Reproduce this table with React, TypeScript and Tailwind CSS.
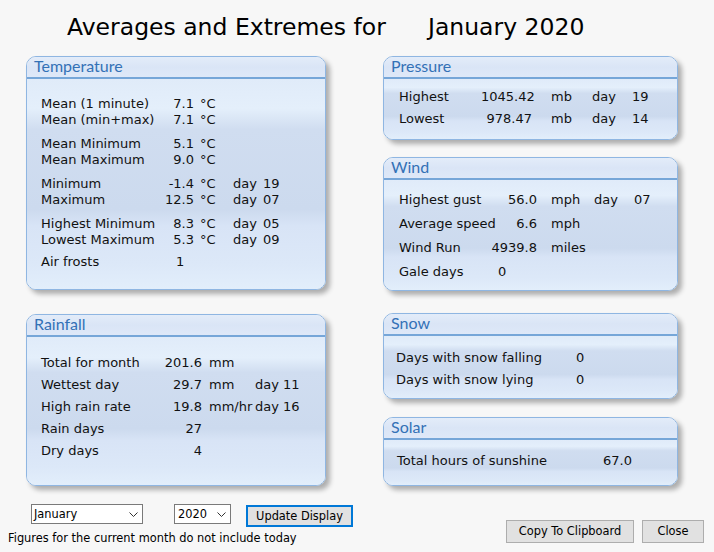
import React from 'react';

type Cell = string | undefined;

const bodyBg =
  'bg-[linear-gradient(180deg,#e0ebf9_0%,#e4effb_14%,#d0ddf0_24%,#ccdaee_62%,#d8e4f6_70%,#dce8f8_88%,#e2eefb_100%)]';

const Panel: React.FC<{ title: string; className: string; children: React.ReactNode }> = ({
  title,
  className,
  children,
}) => (
  <div
    className={`flex flex-col rounded-[10px] border border-[#8fb6e2] overflow-hidden shadow-[4px_4px_5px_rgba(0,0,0,0.3)] ${className}`}
  >
    <div className="h-[20px] shrink-0 pl-[7px] bg-[linear-gradient(180deg,#e3ecf9_0%,#dae5f6_50%,#dee8f8_100%)]">
      <span className="font-['Lato',sans-serif] text-[16px] leading-[17px] text-[#3371b6]">{title}</span>
    </div>
    <div className="h-[2px] shrink-0 bg-[#76a6d8]" />
    <div className={`flex-1 ${bodyBg}`}>{children}</div>
  </div>
);

const TempRow: React.FC<{ label: string; value: string; day?: Cell }> = ({ label, value, day }) => (
  <div className="flex h-[16px] items-center whitespace-nowrap">
    <span className="w-[118px] shrink-0">{label}</span>
    <span className="w-[35px] shrink-0 text-right">{value}</span>
    <span className="w-[39px] shrink-0 pl-[6px]">°C</span>
    {day && (
      <>
        <span className="w-[30px] shrink-0">day</span>
        <span>{day}</span>
      </>
    )}
  </div>
);

const RainRow: React.FC<{ label: string; value: string; unit?: Cell; day?: Cell }> = ({
  label,
  value,
  unit,
  day,
}) => (
  <div className="flex h-[22px] items-center whitespace-nowrap">
    <span className="w-[118px] shrink-0">{label}</span>
    <span className="w-[43px] shrink-0 text-right">{value}</span>
    <span className="w-[53px] shrink-0 pl-[7px]">{unit}</span>
    {day && <span>day {day}</span>}
  </div>
);

const PressRow: React.FC<{ label: string; value: string; day: string }> = ({ label, value, day }) => (
  <div className="flex h-[22px] items-center whitespace-nowrap">
    <span className="w-[82px] shrink-0">{label}</span>
    <span className="w-[51px] shrink-0 text-right">{value}</span>
    <span className="w-[60px] shrink-0 pl-[19px]">mb</span>
    <span className="w-[40px] shrink-0">day</span>
    <span>{day}</span>
  </div>
);

const WindRow: React.FC<{ label: string; value: string; unit: string; day?: Cell }> = ({
  label,
  value,
  unit,
  day,
}) => (
  <div className="flex h-[24px] items-center whitespace-nowrap">
    <span className="w-[90px] shrink-0">{label}</span>
    <span className="w-[48px] shrink-0 text-right">{value}</span>
    <span className="w-[57px] shrink-0 pl-[14px]">{unit}</span>
    {day && (
      <>
        <span className="w-[40px] shrink-0">day</span>
        <span>{day}</span>
      </>
    )}
  </div>
);

const Chevron = () => (
  <svg width="9" height="5" viewBox="0 0 9 5" className="shrink-0">
    <path d="M0.5 0.5 L4.5 4.5 L8.5 0.5" fill="none" stroke="#333" strokeWidth="1" />
  </svg>
);

const FakeSelect: React.FC<{ value: string; className: string }> = ({ value, className }) => (
  <div
    className={`flex h-[20px] items-center justify-between border border-[#7a7a7a] bg-white pr-[4px] ${className}`}
  >
    <span className="leading-[18px]">{value}</span>
    <Chevron />
  </div>
);

export default function App() {
  return (
    <div className="w-[714px] h-[552px] overflow-hidden bg-[#f7f7f7] font-['DejaVu_Sans',sans-serif] text-[#111]">
      <div className="flex h-[41px] pl-[67px] pt-[13px] text-[23.5px] leading-[28px] text-black whitespace-nowrap">
        <span className="w-[361px] shrink-0">Averages and Extremes for</span>
        <span>January 2020</span>
      </div>

      <div className="mt-[15px] flex pl-[26px] text-[13px]">
        <div className="flex w-[300px] flex-col gap-[24px]">
          <Panel title="Temperature" className="h-[234px]">
            <div className="flex flex-col pl-[14px] pt-[17px]">
              <TempRow label="Mean (1 minute)" value="7.1" />
              <TempRow label="Mean (min+max)" value="7.1" />
              <div className="h-[8px]" />
              <TempRow label="Mean Minimum" value="5.1" />
              <TempRow label="Mean Maximum" value="9.0" />
              <div className="h-[8px]" />
              <TempRow label="Minimum" value="-1.4" day="19" />
              <TempRow label="Maximum" value="12.5" day="07" />
              <div className="h-[8px]" />
              <TempRow label="Highest Minimum" value="8.3" day="05" />
              <TempRow label="Lowest Maximum" value="5.3" day="09" />
              <div className="h-[6px]" />
              <div className="flex h-[16px] items-center whitespace-nowrap">
                <span className="w-[135px] shrink-0">Air frosts</span>
                <span>1</span>
              </div>
            </div>
          </Panel>

          <Panel title="Rainfall" className="h-[172px]">
            <div className="flex flex-col pl-[14px] pt-[15px]">
              <RainRow label="Total for month" value="201.6" unit="mm" />
              <RainRow label="Wettest day" value="29.7" unit="mm" day="11" />
              <RainRow label="High rain rate" value="19.8" unit="mm/hr" day="16" />
              <RainRow label="Rain days" value="27" />
              <RainRow label="Dry days" value="4" />
            </div>
          </Panel>
        </div>

        <div className="ml-[57px] flex w-[295px] flex-col">
          <Panel title="Pressure" className="h-[84px]">
            <div className="flex flex-col pl-[15px] pt-[7px]">
              <PressRow label="Highest" value="1045.42" day="19" />
              <PressRow label="Lowest" value="978.47" day="14" />
            </div>
          </Panel>

          <Panel title="Wind" className="mt-[17px] h-[134px]">
            <div className="flex flex-col pl-[15px] pt-[8px]">
              <WindRow label="Highest gust" value="56.0" unit="mph" day="07" />
              <WindRow label="Average speed" value="6.6" unit="mph" />
              <WindRow label="Wind Run" value="4939.8" unit="miles" />
              <div className="flex h-[24px] items-center whitespace-nowrap">
                <span className="w-[99px] shrink-0">Gale days</span>
                <span>0</span>
              </div>
            </div>
          </Panel>

          <Panel title="Snow" className="mt-[22px] h-[86px]">
            <div className="flex flex-col pl-[12px] pt-[11px]">
              <div className="flex h-[22px] items-center whitespace-nowrap">
                <span className="w-[180px] shrink-0">Days with snow falling</span>
                <span>0</span>
              </div>
              <div className="flex h-[22px] items-center whitespace-nowrap">
                <span className="w-[180px] shrink-0">Days with snow lying</span>
                <span>0</span>
              </div>
            </div>
          </Panel>

          <Panel title="Solar" className="mt-[18px] h-[69px]">
            <div className="flex flex-col pl-[13px] pt-[10px]">
              <div className="flex h-[22px] items-center whitespace-nowrap">
                <span className="w-[206px] shrink-0">Total hours of sunshine</span>
                <span>67.0</span>
              </div>
            </div>
          </Panel>
        </div>
      </div>

      <div className="mt-[18px] flex justify-between pr-[10px] text-[11.4px] text-black">
        <div className="flex flex-col pl-[8px]">
          <div className="flex items-start pl-[23px]">
            <FakeSelect value="January" className="w-[112px] pl-[2px]" />
            <FakeSelect value="2020" className="ml-[31px] w-[57px] pl-[3px]" />
            <button className="ml-[15px] mt-[1px] h-[22px] w-[107px] border-2 border-[#0078d7] bg-[#e1e1e1] leading-[18px]">
              Update Display
            </button>
          </div>
          <p className="mt-[4px] leading-[14px] whitespace-nowrap">
            Figures for the current month do not include today
          </p>
        </div>
        <div className="mt-[16px] flex gap-[8px]">
          <button className="h-[23px] w-[128px] border border-[#adadad] bg-[#e1e1e1]">Copy To Clipboard</button>
          <button className="h-[23px] w-[62px] border border-[#adadad] bg-[#e1e1e1]">Close</button>
        </div>
      </div>
    </div>
  );
}
